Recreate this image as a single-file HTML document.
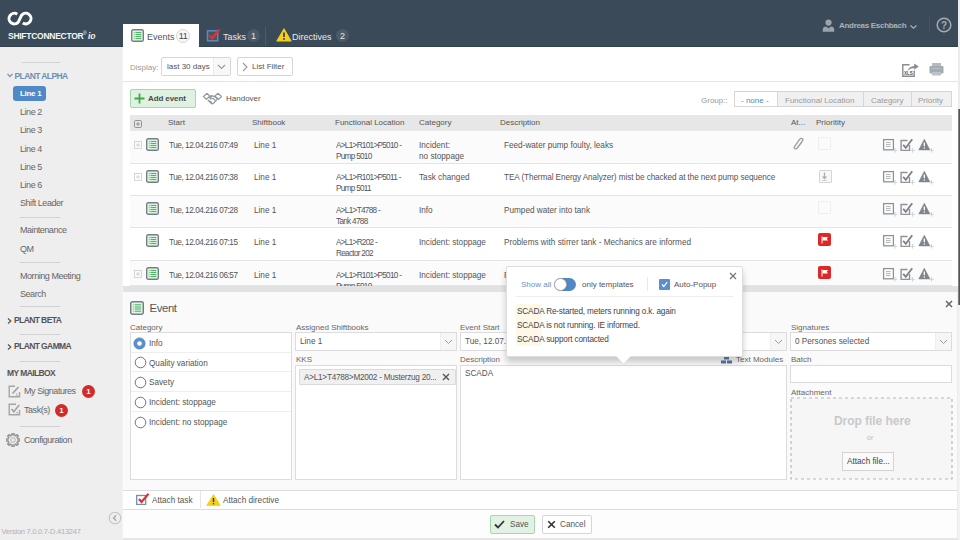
<!DOCTYPE html><html><head><meta charset="utf-8"><style>
*{box-sizing:border-box;margin:0;padding:0}
html,body{width:960px;height:540px;overflow:hidden;background:#fff;font-family:"Liberation Sans",sans-serif;font-size:8px;color:#555}
div,span,svg{position:absolute}
.t{white-space:nowrap;line-height:10px}
.sl{left:20px;color:#666;font-size:9px;letter-spacing:-0.45px}
.sdiv{left:20px;width:40px;height:1px;background:#d2d2d2}
.sh{left:7px;font-weight:bold;color:#555;font-size:8.5px;letter-spacing:-0.6px}
.badge{width:14px;height:14px;border-radius:7px;text-align:center;line-height:14px;font-size:8px}
.box{border:1px solid #dcdcdc;background:#fff}
.th{top:118px;color:#555;white-space:nowrap;line-height:10px}
.c{color:#555;white-space:nowrap;line-height:11px;font-size:8.2px}
.lbl{color:#666;white-space:nowrap;line-height:10px}
</style></head><body>
<div style="left:0;top:0;width:960px;height:47px;background:#3b4a59;border-bottom:1px solid #33414e"></div>
<div style="left:0;top:47px;width:122px;height:493px;background:#eeeeee"></div>
<div style="left:122px;top:47px;width:1px;height:493px;background:#f3f3f3"></div>
<svg style="left:0;top:0" width="40" height="30" viewBox="0 0 40 30">
<path d="M17.19 14.16 A5.3 5.3 0 1 0 18.36 22.01 L21.64 15.19 A5.3 5.3 0 1 1 22.81 23.04" fill="none" stroke="#fff" stroke-width="3"/>
</svg>
<div class="t" style="left:8px;top:31px;color:#f4f6f8;font-weight:bold;font-size:8.5px;letter-spacing:-0.27px">SHIFTCONNECTOR</div>
<div class="t" style="left:83px;top:28px;color:#f4f6f8;font-size:5px">&reg;</div>
<div class="t" style="left:88px;top:31px;color:#f4f6f8;font-weight:bold;font-style:italic;font-size:8.5px">io</div>
<div style="left:123px;top:24px;width:76px;height:23px;background:#fff"></div>
<svg style="left:131px;top:29px" width="13" height="13" viewBox="0 0 13 13">
<rect x="0.7" y="0.7" width="11.6" height="11.6" rx="1.6" fill="#eef8f0" stroke="#747c84" stroke-width="1.4"/>
<rect x="2.2" y="2.2" width="8.6" height="8.6" fill="#d8f1dd"/>
<path d="M4.6 3.5H10.3M4.6 5.5H10.3M4.6 7.5H10.3M4.6 9.5H10.3" stroke="#52b468" stroke-width="1"/>
<path d="M2.8 3.5H3.8M2.8 5.5H3.8M2.8 7.5H3.8M2.8 9.5H3.8" stroke="#7cc98c" stroke-width="1"/>
</svg>
<div class="t" style="left:147px;top:31.5px;font-size:9px;color:#555">Events</div>
<div class="badge" style="left:176px;top:29px;width:14px;height:14px;border:1px solid #d8d8d8;background:#f7f7f7;color:#444;font-size:9px;line-height:12.5px;letter-spacing:-0.5px">11</div>
<svg style="left:206px;top:28px" width="15" height="15" viewBox="0 0 15 15">
<rect x="1.5" y="2.8" width="10.2" height="10" fill="#fff" fill-opacity="0.05" stroke="#5f8ac0" stroke-width="1.5"/>
<path d="M3.5 7.3 L6.2 10.3 L13.5 1.5" fill="none" stroke="#e03131" stroke-width="2.4"/>
</svg>
<div class="t" style="left:223px;top:31.5px;font-size:9px;color:#e6e9ec">Tasks</div>
<div class="badge" style="left:247px;top:29px;width:13px;height:13px;background:#4b5a68;color:#e6e9ec;font-size:9px;line-height:14px">1</div>
<div style="left:265px;top:27px;width:1px;height:19px;background:#4d5c6a"></div>
<svg style="left:276px;top:28px" width="16" height="14" viewBox="0 0 16 14">
<path d="M8 1 L15 13 H1 Z" fill="#f4cf1b" stroke="#f4cf1b" stroke-width="1.2" stroke-linejoin="round"/>
<path d="M8 4.5 V9" stroke="#333" stroke-width="1.6"/><circle cx="8" cy="11" r="0.9" fill="#333"/>
</svg>
<div class="t" style="left:292px;top:31.5px;font-size:9px;color:#e6e9ec">Directives</div>
<div class="badge" style="left:336px;top:29px;width:13px;height:13px;background:#4b5a68;color:#e6e9ec;font-size:9px;line-height:14px">2</div>
<svg style="left:822px;top:19px" width="13" height="13" viewBox="0 0 13 13">
<circle cx="6.5" cy="3.6" r="3.1" fill="#9aa4ad"/><path d="M0.8 12.8 V10.5 Q0.8 7.6 4 7.4 L6.5 9.2 L9 7.4 Q12.2 7.6 12.2 10.5 V12.8Z" fill="#9aa4ad"/>
</svg>
<div class="t" style="left:839px;top:21px;font-weight:bold;color:#a9b2ba;font-size:8px;letter-spacing:-0.3px">Andreas Eschbach</div>
<svg style="left:909px;top:24px" width="9" height="6" viewBox="0 0 9 6"><path d="M1.5 1.5 L4.5 4.2 L7.5 1.5" fill="none" stroke="#a9b2ba" stroke-width="1.2"/></svg>
<div style="left:929px;top:16px;width:1px;height:17px;background:#46555f"></div>
<svg style="left:936px;top:17px" width="16" height="16" viewBox="0 0 16 16"><circle cx="8" cy="8" r="6.8" fill="none" stroke="#a3acb4" stroke-width="1.5"/><text x="8" y="11.6" font-family="Liberation Sans" font-size="10" font-weight="bold" fill="#a3acb4" text-anchor="middle">?</text></svg>
<div class="sdiv" style="top:62px;left:22px;width:38px"></div>
<svg style="left:7px;top:72.5px" width="6" height="5" viewBox="0 0 6 5"><path d="M0.5 0.8 L3 3.6 L5.5 0.8" fill="none" stroke="#6c8fb6" stroke-width="1.2"/></svg>
<div class="t" style="left:14.5px;top:70.5px;font-weight:bold;color:#6c8fb6;font-size:8.5px;letter-spacing:-0.6px">PLANT ALPHA</div>
<div style="left:13px;top:86px;width:33px;height:15px;border-radius:3px;background:#4f8ac6"></div>
<div class="t" style="left:20px;top:89px;font-weight:bold;color:#fff;letter-spacing:-0.3px">Line 1</div>
<div class="t sl" style="top:107.1px">Line 2</div>
<div class="t sl" style="top:125.4px">Line 3</div>
<div class="t sl" style="top:143.6px">Line 4</div>
<div class="t sl" style="top:161.7px">Line 5</div>
<div class="t sl" style="top:179.7px">Line 6</div>
<div class="t sl" style="top:198.3px">Shift Leader</div>
<div class="t sl" style="top:225.2px">Maintenance</div>
<div class="t sl" style="top:244.2px">QM</div>
<div class="t sl" style="top:270.7px">Morning Meeting</div>
<div class="t sl" style="top:288.7px">Search</div>
<div class="sdiv" style="top:217px"></div>
<div class="sdiv" style="top:262px"></div>
<div class="sdiv" style="top:306px"></div>
<div class="sdiv" style="top:334px"></div>
<div class="sdiv" style="top:361px"></div>
<svg style="left:7px;top:317.5px" width="5" height="6" viewBox="0 0 5 6"><path d="M1 0.5 L3.8 3 L1 5.5" fill="none" stroke="#555" stroke-width="1.2"/></svg>
<div class="t sh" style="left:14px;top:315px">PLANT BETA</div>
<svg style="left:7px;top:343.5px" width="5" height="6" viewBox="0 0 5 6"><path d="M1 0.5 L3.8 3 L1 5.5" fill="none" stroke="#555" stroke-width="1.2"/></svg>
<div class="t sh" style="left:14px;top:341px">PLANT GAMMA</div>
<div class="t sh" style="top:368px">MY MAILBOX</div>
<svg style="left:7.5px;top:384.5px" width="13" height="13" viewBox="0 0 13 13"><path d="M11.5 7 V11.8 H1.2 V1.2 H7" fill="none" stroke="#a5a5a5" stroke-width="1.4"/><path d="M4.5 8.5 L10.5 2" stroke="#a0a0a0" stroke-width="1.6"/><path d="M8 8.5 L9.5 11" stroke="#b5b5b5" stroke-width="1.2"/></svg>
<div class="t sl" style="left:24px;top:386px">My Signatures</div>
<div class="badge" style="left:82px;top:385px;width:13px;height:13px;background:#d42a2a;color:#fff;font-weight:bold;line-height:13px">1</div>
<svg style="left:7.5px;top:402.5px" width="13" height="13" viewBox="0 0 13 13"><path d="M11.5 7 V11.8 H1.2 V1.2 H8" fill="none" stroke="#a5a5a5" stroke-width="1.4"/><path d="M3.5 6 L5.8 8.8 L11.2 2" fill="none" stroke="#a0a0a0" stroke-width="1.5"/><path d="M8.5 9 L10 11" stroke="#b5b5b5" stroke-width="1.2"/></svg>
<div class="t sl" style="left:24px;top:404.5px">Task(s)</div>
<div class="badge" style="left:55px;top:404px;width:13px;height:13px;background:#d42a2a;color:#fff;font-weight:bold;line-height:13px">1</div>
<div class="sdiv" style="top:426px"></div>
<svg style="left:5.5px;top:433px" width="14" height="14" viewBox="0 0 14 14"><path d="M11.88 5.91 L13.54 6.14 L13.54 7.86 L11.88 8.09 L11.62 8.91 L11.22 9.68 L12.23 11.02 L11.02 12.23 L9.68 11.22 L8.91 11.62 L8.09 11.88 L7.86 13.54 L6.14 13.54 L5.91 11.88 L5.09 11.62 L4.32 11.22 L2.98 12.23 L1.77 11.02 L2.78 9.68 L2.38 8.91 L2.12 8.09 L0.46 7.86 L0.46 6.14 L2.12 5.91 L2.38 5.09 L2.78 4.32 L1.77 2.98 L2.98 1.77 L4.32 2.78 L5.09 2.38 L5.91 2.12 L6.14 0.46 L7.86 0.46 L8.09 2.12 L8.91 2.38 L9.68 2.78 L11.02 1.77 L12.23 2.98 L11.22 4.32 L11.62 5.09Z" fill="none" stroke="#9a9a9a" stroke-width="1.7" stroke-linejoin="round"/><circle cx="7" cy="7" r="2.3" fill="none" stroke="#b0b0b0" stroke-width="1"/></svg>
<div class="t sl" style="left:24px;top:435px">Configuration</div>
<svg style="left:107.5px;top:510.5px" width="14" height="14" viewBox="0 0 14 14"><circle cx="7" cy="7" r="5.8" fill="none" stroke="#c4c4c4" stroke-width="1.1"/><path d="M8.2 4.3 L5.6 7 L8.2 9.7" fill="none" stroke="#a8a8a8" stroke-width="1.4"/></svg>
<div class="t" style="left:1.5px;top:526.5px;color:#b0b0b0;font-size:7.5px;letter-spacing:-0.25px">Version 7.0.0.7-D.413247</div>
<div class="t" style="left:130px;top:63px;color:#999">Display:</div>
<div class="box" style="left:161px;top:57px;width:70px;height:19px;border-color:#d6d6d6;border-radius:2px"></div>
<div style="left:213px;top:58px;width:17px;height:17px;background:#f8f8f8;border-left:1px dotted #e0e0e0"></div>
<svg style="left:217px;top:64px" width="9" height="6" viewBox="0 0 9 6"><path d="M1 1 L4.5 4.5 L8 1" fill="none" stroke="#9a9a9a" stroke-width="1.1"/></svg>
<div class="t" style="left:167px;top:62px;color:#555">last 30 days</div>
<div class="box" style="left:237px;top:57px;width:56px;height:19px;border-color:#d6d6d6;border-radius:2px"></div>
<svg style="left:242px;top:62px" width="6" height="10" viewBox="0 0 6 10"><path d="M1 1 L5 5 L1 9" fill="none" stroke="#999" stroke-width="1.1"/></svg>
<div class="t" style="left:252px;top:62px;color:#555">List Filter</div>
<svg style="left:901px;top:61px" width="19" height="17" viewBox="0 0 19 17"><path d="M8.5 3.8 H1.8 V15.2 H13.2 V9.5" fill="none" stroke="#8c8c8c" stroke-width="1.4"/><path d="M6.5 9.5 Q8 5.5 13.2 5 V2.5 L17.8 5.5 L13.2 8.8 V7 Q9.5 7 6.5 9.5Z" fill="#8c8c8c"/><text x="7.4" y="13.8" font-family="Liberation Sans" font-size="4.6" font-weight="bold" fill="#555" text-anchor="middle">XLS</text></svg>
<svg style="left:929px;top:62px" width="15" height="14" viewBox="0 0 15 14"><rect x="3" y="1" width="9" height="3.5" fill="#b3bac1"/><rect x="0.5" y="4" width="14" height="7.5" rx="1" fill="#a2aab2"/><rect x="2.5" y="6" width="10" height="1" fill="#b9c0c6"/><rect x="3" y="10" width="9" height="3.5" fill="#bcc2c8"/></svg>
<div style="left:123px;top:81px;width:837px;height:1px;background:#e3e3e3"></div>
<div style="left:130px;top:89px;width:66px;height:19px;background:#dff1e1;border:1px solid #a6d7ab;border-radius:2px"></div>
<svg style="left:134px;top:93px" width="11" height="11" viewBox="0 0 11 11"><path d="M5.5 0.5V10.5M0.5 5.5H10.5" stroke="#3eab4b" stroke-width="1.8"/></svg>
<div class="t" style="left:148px;top:94px;color:#4a4a4a;font-weight:bold;letter-spacing:-0.1px">Add event</div>
<svg style="left:202px;top:91px" width="21" height="15" viewBox="0 0 21 15"><g fill="none" stroke="#8f959a" stroke-width="1.15" stroke-linejoin="round"><path d="M1.5 5.5 L5 2.3 L7.8 5 L4.3 8.3Z"/><path d="M13 5 L15.8 2.3 L19.5 5.5 L16.5 8.3Z"/><path d="M6.5 7 L9.3 4.6 L12.8 5.6 L15.5 8 L11.5 12.3 Q10.3 13.3 9.2 12.3 L5.8 9"/><path d="M9.8 5 L8 7.6 Q9.5 8.6 11 7.2 L13.5 9.8 M7.4 9.6 L10 11.8"/></g></svg>
<div class="t" style="left:226px;top:94px;color:#555">Handover</div>
<div class="t" style="left:701px;top:96px;color:#999">Group::</div>
<div style="left:734px;top:91px;width:218px;height:16px;background:#f0f0f0;border:1px solid #d6d6d6"></div>
<div style="left:735px;top:92px;width:42px;height:14px;background:#fff"></div>
<div style="left:777px;top:92px;width:1px;height:14px;background:#d6d6d6"></div>
<div style="left:863px;top:92px;width:1px;height:14px;background:#d6d6d6"></div>
<div style="left:911px;top:92px;width:1px;height:14px;background:#d6d6d6"></div>
<div class="t" style="left:741px;top:96px;color:#4f8ac6">- none -</div>
<div class="t" style="left:785px;top:96px;color:#999">Functional Location</div>
<div class="t" style="left:871px;top:96px;color:#999">Category</div>
<div class="t" style="left:918px;top:96px;color:#999">Priority</div>
<div style="left:130px;top:115px;width:822px;height:16px;background:#e7e7e7"></div>
<svg style="left:133.5px;top:120px" width="8" height="8" viewBox="0 0 8 8"><rect x="0.5" y="0.5" width="7" height="7" rx="1.2" fill="none" stroke="#888" stroke-width="0.9"/><path d="M2 4H6M4 2V6" stroke="#888" stroke-width="0.9"/></svg>
<div class="th" style="left:168px">Start</div>
<div class="th" style="left:252px">Shiftbook</div>
<div class="th" style="left:335px">Functional Location</div>
<div class="th" style="left:419px">Category</div>
<div class="th" style="left:500px">Description</div>
<div class="th" style="left:791px">At...</div>
<div class="th" style="left:816px">Prioritity</div>
<div style="left:130px;top:131px;width:822px;height:33px;background:#fbfbfb;border-bottom:1px solid #e4e4e4"></div>
<svg style="left:134px;top:141px" width="8" height="8" viewBox="0 0 8 8"><rect x="0.5" y="0.5" width="7" height="7" fill="none" stroke="#ccc" stroke-width="0.8"/><path d="M2 4H6M4 2V6" stroke="#ccc" stroke-width="0.8"/></svg>
<svg style="left:146px;top:138px" width="13" height="13" viewBox="0 0 13 13">
<rect x="0.7" y="0.7" width="11.6" height="11.6" rx="1.6" fill="#eef8f0" stroke="#747c84" stroke-width="1.4"/>
<rect x="2.2" y="2.2" width="8.6" height="8.6" fill="#d8f1dd"/>
<path d="M4.6 3.5H10.3M4.6 5.5H10.3M4.6 7.5H10.3M4.6 9.5H10.3" stroke="#52b468" stroke-width="1"/>
<path d="M2.8 3.5H3.8M2.8 5.5H3.8M2.8 7.5H3.8M2.8 9.5H3.8" stroke="#7cc98c" stroke-width="1"/>
</svg>
<div class="c" style="left:169px;top:139.6px;letter-spacing:-0.45px">Tue, 12.04.216 07:49</div>
<div class="c" style="left:254px;top:139.6px">Line 1</div>
<div class="c" style="left:336px;top:139.6px;letter-spacing:-0.7px">A&gt;L1&gt;R101&gt;P5010 -<br>Pump 5010</div>
<div class="c" style="left:419px;top:139.6px">Incident:<br>no stoppage</div>
<div class="c" style="left:504px;top:139.6px;letter-spacing:0px">Feed-water pump foulty, leaks</div>
<svg style="left:793px;top:137px" width="11" height="13" viewBox="0 0 11 13"><path d="M8.8 5.2 L4.3 11 Q3 12.4 1.8 11.6 Q0.7 10.8 1.7 9.3 L6.8 2.2 Q8 0.8 9.3 1.6 Q10.4 2.5 9.4 3.9 L5 9.8" fill="none" stroke="#979ea4" stroke-width="1.3"/></svg>
<div style="left:818px;top:137px;width:13px;height:13px;border:1px solid #eee;border-radius:1px"></div>
<svg style="left:882px;top:138px" width="17" height="16" viewBox="0 0 17 16"><rect x="1.6" y="1.6" width="9.8" height="10.2" fill="#fff" stroke="#8d9399" stroke-width="1.3"/><path d="M4 4.6H8.6M4 6.6H8.6M4 8.6H8.6" stroke="#a3a9ae" stroke-width="0.9"/><path d="M13 10V14.6M10.7 12.3H15.3" stroke="#cfd3d6" stroke-width="1"/></svg>
<svg style="left:899px;top:138px" width="17" height="16" viewBox="0 0 17 16"><path d="M10.5 7V12.4H2.1V2.5H8.5" fill="none" stroke="#8d9399" stroke-width="1.4"/><path d="M4.2 6.8 L6.8 9.8 L13.2 1.3" fill="none" stroke="#7d848a" stroke-width="1.9"/><path d="M13.5 10V14.6M11.2 12.3H15.8" stroke="#cfd3d6" stroke-width="1"/></svg>
<svg style="left:918px;top:138px" width="17" height="16" viewBox="0 0 17 16"><path d="M6.3 1.3 L11.9 11.9 H0.8Z" fill="#7e858b" stroke="#7e858b" stroke-width="0.6" stroke-linejoin="round"/><path d="M6.3 4.6V8.3" stroke="#fff" stroke-width="1.3"/><circle cx="6.3" cy="10" r="0.75" fill="#fff"/><path d="M13.5 10V14.6M11.2 12.3H15.8" stroke="#cfd3d6" stroke-width="1"/></svg>
<div style="left:130px;top:164px;width:822px;height:32px;background:#ffffff;border-bottom:1px solid #e4e4e4"></div>
<svg style="left:134px;top:173px" width="8" height="8" viewBox="0 0 8 8"><rect x="0.5" y="0.5" width="7" height="7" fill="none" stroke="#ccc" stroke-width="0.8"/><path d="M2 4H6M4 2V6" stroke="#ccc" stroke-width="0.8"/></svg>
<svg style="left:146px;top:170px" width="13" height="13" viewBox="0 0 13 13">
<rect x="0.7" y="0.7" width="11.6" height="11.6" rx="1.6" fill="#eef8f0" stroke="#747c84" stroke-width="1.4"/>
<rect x="2.2" y="2.2" width="8.6" height="8.6" fill="#d8f1dd"/>
<path d="M4.6 3.5H10.3M4.6 5.5H10.3M4.6 7.5H10.3M4.6 9.5H10.3" stroke="#52b468" stroke-width="1"/>
<path d="M2.8 3.5H3.8M2.8 5.5H3.8M2.8 7.5H3.8M2.8 9.5H3.8" stroke="#7cc98c" stroke-width="1"/>
</svg>
<div class="c" style="left:169px;top:171.6px;letter-spacing:-0.45px">Tue, 12.04.216 07:38</div>
<div class="c" style="left:254px;top:171.6px">Line 1</div>
<div class="c" style="left:336px;top:171.6px;letter-spacing:-0.7px">A&gt;L1&gt;R101&gt;P5011 -<br>Pump 5011</div>
<div class="c" style="left:419px;top:171.6px">Task changed<br></div>
<div class="c" style="left:504px;top:171.6px;letter-spacing:-0.09px">TEA (Thermal Energy Analyzer) mist be chacked at the next pump sequence</div>
<div style="left:818.5px;top:169.5px;width:13px;height:13px;border:1px solid #d4d4d4;border-radius:1px;background:#f8f8f8"></div>
<svg style="left:821px;top:172px" width="7" height="9" viewBox="0 0 7 9"><path d="M3.5 0.5V5" stroke="#b0b0b0" stroke-width="1.3"/><path d="M0.8 4.5H6.2L3.5 7.8Z" fill="#b0b0b0"/><path d="M1 8.5H6" stroke="#c8c8c8" stroke-width="0.8"/></svg>
<svg style="left:882px;top:170px" width="17" height="16" viewBox="0 0 17 16"><rect x="1.6" y="1.6" width="9.8" height="10.2" fill="#fff" stroke="#8d9399" stroke-width="1.3"/><path d="M4 4.6H8.6M4 6.6H8.6M4 8.6H8.6" stroke="#a3a9ae" stroke-width="0.9"/><path d="M13 10V14.6M10.7 12.3H15.3" stroke="#cfd3d6" stroke-width="1"/></svg>
<svg style="left:899px;top:170px" width="17" height="16" viewBox="0 0 17 16"><path d="M10.5 7V12.4H2.1V2.5H8.5" fill="none" stroke="#8d9399" stroke-width="1.4"/><path d="M4.2 6.8 L6.8 9.8 L13.2 1.3" fill="none" stroke="#7d848a" stroke-width="1.9"/><path d="M13.5 10V14.6M11.2 12.3H15.8" stroke="#cfd3d6" stroke-width="1"/></svg>
<svg style="left:918px;top:170px" width="17" height="16" viewBox="0 0 17 16"><path d="M6.3 1.3 L11.9 11.9 H0.8Z" fill="#7e858b" stroke="#7e858b" stroke-width="0.6" stroke-linejoin="round"/><path d="M6.3 4.6V8.3" stroke="#fff" stroke-width="1.3"/><circle cx="6.3" cy="10" r="0.75" fill="#fff"/><path d="M13.5 10V14.6M11.2 12.3H15.8" stroke="#cfd3d6" stroke-width="1"/></svg>
<div style="left:130px;top:196px;width:822px;height:32px;background:#fbfbfb;border-bottom:1px solid #e4e4e4"></div>
<svg style="left:146px;top:202px" width="13" height="13" viewBox="0 0 13 13">
<rect x="0.7" y="0.7" width="11.6" height="11.6" rx="1.6" fill="#eef8f0" stroke="#747c84" stroke-width="1.4"/>
<rect x="2.2" y="2.2" width="8.6" height="8.6" fill="#d8f1dd"/>
<path d="M4.6 3.5H10.3M4.6 5.5H10.3M4.6 7.5H10.3M4.6 9.5H10.3" stroke="#52b468" stroke-width="1"/>
<path d="M2.8 3.5H3.8M2.8 5.5H3.8M2.8 7.5H3.8M2.8 9.5H3.8" stroke="#7cc98c" stroke-width="1"/>
</svg>
<div class="c" style="left:169px;top:204.6px;letter-spacing:-0.45px">Tue, 12.04.216 07:28</div>
<div class="c" style="left:254px;top:204.6px">Line 1</div>
<div class="c" style="left:336px;top:204.6px;letter-spacing:-0.7px">A&gt;L1&gt;T4788 -<br>Tank 4788</div>
<div class="c" style="left:419px;top:204.6px">Info<br></div>
<div class="c" style="left:504px;top:204.6px;letter-spacing:0px">Pumped water into tank</div>
<div style="left:818px;top:201px;width:13px;height:13px;border:1px solid #eee;border-radius:1px"></div>
<svg style="left:882px;top:202px" width="17" height="16" viewBox="0 0 17 16"><rect x="1.6" y="1.6" width="9.8" height="10.2" fill="#fff" stroke="#8d9399" stroke-width="1.3"/><path d="M4 4.6H8.6M4 6.6H8.6M4 8.6H8.6" stroke="#a3a9ae" stroke-width="0.9"/><path d="M13 10V14.6M10.7 12.3H15.3" stroke="#cfd3d6" stroke-width="1"/></svg>
<svg style="left:899px;top:202px" width="17" height="16" viewBox="0 0 17 16"><path d="M10.5 7V12.4H2.1V2.5H8.5" fill="none" stroke="#8d9399" stroke-width="1.4"/><path d="M4.2 6.8 L6.8 9.8 L13.2 1.3" fill="none" stroke="#7d848a" stroke-width="1.9"/><path d="M13.5 10V14.6M11.2 12.3H15.8" stroke="#cfd3d6" stroke-width="1"/></svg>
<svg style="left:918px;top:202px" width="17" height="16" viewBox="0 0 17 16"><path d="M6.3 1.3 L11.9 11.9 H0.8Z" fill="#7e858b" stroke="#7e858b" stroke-width="0.6" stroke-linejoin="round"/><path d="M6.3 4.6V8.3" stroke="#fff" stroke-width="1.3"/><circle cx="6.3" cy="10" r="0.75" fill="#fff"/><path d="M13.5 10V14.6M11.2 12.3H15.8" stroke="#cfd3d6" stroke-width="1"/></svg>
<div style="left:130px;top:228px;width:822px;height:33px;background:#ffffff;border-bottom:1px solid #e4e4e4"></div>
<svg style="left:146px;top:234px" width="13" height="13" viewBox="0 0 13 13">
<rect x="0.7" y="0.7" width="11.6" height="11.6" rx="1.6" fill="#eef8f0" stroke="#747c84" stroke-width="1.4"/>
<rect x="2.2" y="2.2" width="8.6" height="8.6" fill="#d8f1dd"/>
<path d="M4.6 3.5H10.3M4.6 5.5H10.3M4.6 7.5H10.3M4.6 9.5H10.3" stroke="#52b468" stroke-width="1"/>
<path d="M2.8 3.5H3.8M2.8 5.5H3.8M2.8 7.5H3.8M2.8 9.5H3.8" stroke="#7cc98c" stroke-width="1"/>
</svg>
<div class="c" style="left:169px;top:236.6px;letter-spacing:-0.45px">Tue, 12.04.216 07:15</div>
<div class="c" style="left:254px;top:236.6px">Line 1</div>
<div class="c" style="left:336px;top:236.6px;letter-spacing:-0.7px">A&gt;L1&gt;R202 -<br>Reactor 202</div>
<div class="c" style="left:419px;top:236.6px">Incident: stoppage<br></div>
<div class="c" style="left:504px;top:236.6px;letter-spacing:0px">Problems with stirrer tank -  Mechanics are informed</div>
<div style="left:818px;top:233px;width:13px;height:13px;border-radius:2px;background:#e02727"></div>
<svg style="left:821px;top:236px" width="8" height="8" viewBox="0 0 8 8"><path d="M1 0.5V7.5" stroke="#fff" stroke-width="1"/><path d="M1.5 1H7L5.8 2.8L7 4.5H1.5Z" fill="#fff"/></svg>
<svg style="left:882px;top:234px" width="17" height="16" viewBox="0 0 17 16"><rect x="1.6" y="1.6" width="9.8" height="10.2" fill="#fff" stroke="#8d9399" stroke-width="1.3"/><path d="M4 4.6H8.6M4 6.6H8.6M4 8.6H8.6" stroke="#a3a9ae" stroke-width="0.9"/><path d="M13 10V14.6M10.7 12.3H15.3" stroke="#cfd3d6" stroke-width="1"/></svg>
<svg style="left:899px;top:234px" width="17" height="16" viewBox="0 0 17 16"><path d="M10.5 7V12.4H2.1V2.5H8.5" fill="none" stroke="#8d9399" stroke-width="1.4"/><path d="M4.2 6.8 L6.8 9.8 L13.2 1.3" fill="none" stroke="#7d848a" stroke-width="1.9"/><path d="M13.5 10V14.6M11.2 12.3H15.8" stroke="#cfd3d6" stroke-width="1"/></svg>
<svg style="left:918px;top:234px" width="17" height="16" viewBox="0 0 17 16"><path d="M6.3 1.3 L11.9 11.9 H0.8Z" fill="#7e858b" stroke="#7e858b" stroke-width="0.6" stroke-linejoin="round"/><path d="M6.3 4.6V8.3" stroke="#fff" stroke-width="1.3"/><circle cx="6.3" cy="10" r="0.75" fill="#fff"/><path d="M13.5 10V14.6M11.2 12.3H15.8" stroke="#cfd3d6" stroke-width="1"/></svg>
<div style="left:130px;top:261px;width:822px;height:25px;background:#fbfbfb;border-bottom:1px solid #e4e4e4"></div>
<svg style="left:134px;top:270px" width="8" height="8" viewBox="0 0 8 8"><rect x="0.5" y="0.5" width="7" height="7" fill="none" stroke="#ccc" stroke-width="0.8"/><path d="M2 4H6M4 2V6" stroke="#ccc" stroke-width="0.8"/></svg>
<svg style="left:146px;top:267px" width="13" height="13" viewBox="0 0 13 13">
<rect x="0.7" y="0.7" width="11.6" height="11.6" rx="1.6" fill="#eef8f0" stroke="#747c84" stroke-width="1.4"/>
<rect x="2.2" y="2.2" width="8.6" height="8.6" fill="#d8f1dd"/>
<path d="M4.6 3.5H10.3M4.6 5.5H10.3M4.6 7.5H10.3M4.6 9.5H10.3" stroke="#52b468" stroke-width="1"/>
<path d="M2.8 3.5H3.8M2.8 5.5H3.8M2.8 7.5H3.8M2.8 9.5H3.8" stroke="#7cc98c" stroke-width="1"/>
</svg>
<div class="c" style="left:169px;top:269.6px;letter-spacing:-0.45px">Tue, 12.04.216 06:57</div>
<div class="c" style="left:254px;top:269.6px">Line 1</div>
<div class="c" style="left:336px;top:269.6px;letter-spacing:-0.7px">A&gt;L1&gt;R101&gt;P5010 -<br>Pump 5010</div>
<div class="c" style="left:419px;top:269.6px">Incident: stoppage<br></div>
<div class="c" style="left:504px;top:269.6px;letter-spacing:0px">Problems with pump</div>
<div style="left:818px;top:266px;width:13px;height:13px;border-radius:2px;background:#e02727"></div>
<svg style="left:821px;top:269px" width="8" height="8" viewBox="0 0 8 8"><path d="M1 0.5V7.5" stroke="#fff" stroke-width="1"/><path d="M1.5 1H7L5.8 2.8L7 4.5H1.5Z" fill="#fff"/></svg>
<svg style="left:882px;top:267px" width="17" height="16" viewBox="0 0 17 16"><rect x="1.6" y="1.6" width="9.8" height="10.2" fill="#fff" stroke="#8d9399" stroke-width="1.3"/><path d="M4 4.6H8.6M4 6.6H8.6M4 8.6H8.6" stroke="#a3a9ae" stroke-width="0.9"/><path d="M13 10V14.6M10.7 12.3H15.3" stroke="#cfd3d6" stroke-width="1"/></svg>
<svg style="left:899px;top:267px" width="17" height="16" viewBox="0 0 17 16"><path d="M10.5 7V12.4H2.1V2.5H8.5" fill="none" stroke="#8d9399" stroke-width="1.4"/><path d="M4.2 6.8 L6.8 9.8 L13.2 1.3" fill="none" stroke="#7d848a" stroke-width="1.9"/><path d="M13.5 10V14.6M11.2 12.3H15.8" stroke="#cfd3d6" stroke-width="1"/></svg>
<svg style="left:918px;top:267px" width="17" height="16" viewBox="0 0 17 16"><path d="M6.3 1.3 L11.9 11.9 H0.8Z" fill="#7e858b" stroke="#7e858b" stroke-width="0.6" stroke-linejoin="round"/><path d="M6.3 4.6V8.3" stroke="#fff" stroke-width="1.3"/><circle cx="6.3" cy="10" r="0.75" fill="#fff"/><path d="M13.5 10V14.6M11.2 12.3H15.8" stroke="#cfd3d6" stroke-width="1"/></svg>
<div style="left:123px;top:286px;width:835px;height:6px;background:#e0e2e4"></div>
<div style="left:123px;top:292px;width:835px;height:248px;background:#fafafa"></div>
<svg style="left:130px;top:301px" width="14" height="14" viewBox="0 0 13 13">
<rect x="0.7" y="0.7" width="11.6" height="11.6" rx="1.6" fill="#eef8f0" stroke="#747c84" stroke-width="1.4"/>
<rect x="2.2" y="2.2" width="8.6" height="8.6" fill="#d8f1dd"/>
<path d="M4.6 3.5H10.3M4.6 5.5H10.3M4.6 7.5H10.3M4.6 9.5H10.3" stroke="#52b468" stroke-width="1"/>
<path d="M2.8 3.5H3.8M2.8 5.5H3.8M2.8 7.5H3.8M2.8 9.5H3.8" stroke="#7cc98c" stroke-width="1"/>
</svg>
<div class="t" style="left:149.5px;top:300.5px;font-size:11.3px;line-height:14px;color:#555;letter-spacing:-0.35px">Event</div>
<svg style="left:945px;top:300px" width="8" height="8" viewBox="0 0 8 8"><path d="M1 1L7 7M7 1L1 7" stroke="#666" stroke-width="1.5"/></svg>
<div class="lbl" style="left:130px;top:323px">Category</div>
<div class="lbl" style="left:296px;top:323px">Assigned Shiftbooks</div>
<div class="lbl" style="left:460px;top:323px">Event Start</div>
<div class="lbl" style="left:791px;top:323px">Signatures</div>
<div class="box" style="left:130px;top:332px;width:162px;height:148px"></div>
<div style="left:131px;top:352px;width:160px;height:1px;background:#eeeeee"></div>
<svg style="left:133px;top:337px" width="13" height="13" viewBox="0 0 13 13"><circle cx="6.5" cy="6.5" r="5.6" fill="#5b8fca" stroke="#4a80c0" stroke-width="0.8"/><circle cx="6.5" cy="6.5" r="2.3" fill="#fff"/></svg>
<div class="c" style="left:149px;top:338px;color:#555">Info</div>
<div style="left:131px;top:371px;width:160px;height:1px;background:#eeeeee"></div>
<svg style="left:133.5px;top:356px" width="13" height="13" viewBox="0 0 13 13"><circle cx="6.5" cy="6.5" r="5.3" fill="#fff" stroke="#6e6e6e" stroke-width="1"/></svg>
<div class="c" style="left:149px;top:358px;color:#555">Quality variation</div>
<div style="left:131px;top:391px;width:160px;height:1px;background:#eeeeee"></div>
<svg style="left:133.5px;top:376px" width="13" height="13" viewBox="0 0 13 13"><circle cx="6.5" cy="6.5" r="5.3" fill="#fff" stroke="#6e6e6e" stroke-width="1"/></svg>
<div class="c" style="left:149px;top:377px;color:#555">Savety</div>
<div style="left:131px;top:411px;width:160px;height:1px;background:#eeeeee"></div>
<svg style="left:133.5px;top:396px" width="13" height="13" viewBox="0 0 13 13"><circle cx="6.5" cy="6.5" r="5.3" fill="#fff" stroke="#6e6e6e" stroke-width="1"/></svg>
<div class="c" style="left:149px;top:397px;color:#555">Incident: stoppage</div>
<svg style="left:133.5px;top:416px" width="13" height="13" viewBox="0 0 13 13"><circle cx="6.5" cy="6.5" r="5.3" fill="#fff" stroke="#6e6e6e" stroke-width="1"/></svg>
<div class="c" style="left:149px;top:417px;color:#555">Incident: no stoppage</div>
<div class="box" style="left:295px;top:332px;width:162px;height:19px"></div>
<div style="left:440px;top:333px;width:16px;height:17px;background:#f6f6f6;border-left:1px solid #eee"></div>
<svg style="left:444px;top:339px" width="9" height="6" viewBox="0 0 9 6"><path d="M1 1 L4.5 4.5 L8 1" fill="none" stroke="#999" stroke-width="1"/></svg>
<div class="c" style="left:300px;top:336px">Line 1</div>
<div class="lbl" style="left:296px;top:355px">KKS</div>
<div class="box" style="left:295px;top:365px;width:162px;height:115px"></div>
<div style="left:299px;top:369px;width:157px;height:16px;background:#f0f0f0;border:1px solid #dadada;border-radius:1px"></div>
<div class="c" style="left:304px;top:372px;letter-spacing:-0.25px">A&gt;L1&gt;T4788&gt;M2002 - Musterzug 20...</div>
<svg style="left:442px;top:373px" width="8" height="8" viewBox="0 0 8 8"><path d="M1 1L7 7M7 1L1 7" stroke="#555" stroke-width="1.4"/></svg>
<div class="box" style="left:460px;top:332px;width:327px;height:19px"></div>
<div style="left:770px;top:333px;width:16px;height:17px;background:#f6f6f6;border-left:1px solid #eee"></div>
<svg style="left:774px;top:339px" width="9" height="6" viewBox="0 0 9 6"><path d="M1 1 L4.5 4.5 L8 1" fill="none" stroke="#999" stroke-width="1"/></svg>
<div class="c" style="left:465px;top:336px">Tue, 12.07.2016</div>
<div class="lbl" style="left:460px;top:355px">Description</div>
<svg style="left:721px;top:357px" width="11" height="7" viewBox="0 0 11 7"><rect x="3" y="0" width="5" height="2.5" fill="#5b7fa8"/><rect x="0" y="3.5" width="5" height="3" fill="#4f79a8"/><rect x="6" y="3.5" width="5" height="3" fill="#4f79a8"/></svg>
<div class="lbl" style="left:736px;top:355px;color:#666">Text Modules</div>
<div class="box" style="left:460px;top:365px;width:327px;height:115px"></div>
<div class="c" style="left:465px;top:368px">SCADA</div>
<div class="box" style="left:790px;top:332px;width:162px;height:19px"></div>
<div style="left:935px;top:333px;width:16px;height:17px;background:#f6f6f6;border-left:1px solid #eee"></div>
<svg style="left:939px;top:339px" width="9" height="6" viewBox="0 0 9 6"><path d="M1 1 L4.5 4.5 L8 1" fill="none" stroke="#999" stroke-width="1"/></svg>
<div class="c" style="left:795px;top:336px">0 Persones selected</div>
<div class="lbl" style="left:791px;top:355px">Batch</div>
<div class="box" style="left:790px;top:365px;width:162px;height:18px"></div>
<div class="lbl" style="left:791px;top:388px">Attachment</div>
<svg style="left:790px;top:397px" width="163" height="83" viewBox="0 0 163 83"><rect x="1" y="1" width="161" height="81" fill="#f6f6f6" stroke="#b8b8b8" stroke-width="1.2" stroke-dasharray="3 3"/></svg>
<div class="t" style="left:834px;top:413.5px;font-size:12px;line-height:15px;font-weight:bold;color:#c9c9c9;letter-spacing:-0.05px">Drop file here</div>
<div class="t" style="left:867px;top:433px;font-size:7px;color:#bbb">or</div>
<div style="left:842px;top:452px;width:52px;height:19px;background:#fafafa;border:1px solid #d3d3d3"></div>
<div class="c" style="left:847px;top:456px;color:#444">Attach file...</div>
<div style="left:123px;top:490px;width:835px;height:1px;background:#dcdcdc"></div>
<div style="left:123px;top:491px;width:835px;height:18px;background:#fff"></div>
<div style="left:123px;top:509px;width:835px;height:1px;background:#dcdcdc"></div>
<div style="left:123px;top:510px;width:835px;height:28px;background:#fdfdfd"></div>
<div style="left:123px;top:538px;width:837px;height:2px;background:#e6e6e6"></div>
<svg style="left:136px;top:493px" width="14" height="12" viewBox="0 0 14 12"><rect x="0.7" y="2.5" width="9" height="9" fill="#fff" stroke="#6f8fb5" stroke-width="1.3"/><path d="M3 6 L5.5 9 L12.5 0.8" fill="none" stroke="#e03131" stroke-width="2.2"/></svg>
<div class="c" style="left:152px;top:494.5px">Attach task</div>
<div style="left:200px;top:491px;width:1px;height:17px;background:#e6e6e6"></div>
<svg style="left:206px;top:494px" width="15" height="12" viewBox="0 0 15 12"><path d="M7.5 0.6 L14.3 11.4 H0.7 Z" fill="#f4cf1b" stroke="#f4cf1b" stroke-width="0.8" stroke-linejoin="round"/><path d="M7.5 4 V8" stroke="#333" stroke-width="1.4"/><circle cx="7.5" cy="9.7" r="0.8" fill="#333"/></svg>
<div class="c" style="left:223px;top:494.5px">Attach directive</div>
<div style="left:490px;top:515px;width:45px;height:19px;background:#e1f1e3;border:1px solid #a5d6ad;border-radius:2px"></div>
<svg style="left:494px;top:520px" width="11" height="9" viewBox="0 0 11 9"><path d="M1 4.5 L4 7.5 L10 1" fill="none" stroke="#333" stroke-width="1.8"/></svg>
<div class="c" style="left:510px;top:519px;color:#555">Save</div>
<div style="left:542px;top:515px;width:50px;height:19px;background:#fff;border:1px solid #d6d6d6;border-radius:2px"></div>
<svg style="left:547px;top:520px" width="9" height="9" viewBox="0 0 9 9"><path d="M1.2 1.2L7.8 7.8M7.8 1.2L1.2 7.8" stroke="#333" stroke-width="1.6"/></svg>
<div class="c" style="left:560px;top:519px;color:#555">Cancel</div>
<div style="left:505.5px;top:266px;width:237px;height:91px;background:#fff;border:1px solid #dedede;border-radius:2px;box-shadow:0 5px 6px rgba(0,0,0,0.2)"></div>
<svg style="left:615px;top:356px" width="18" height="10" viewBox="0 0 18 10"><path d="M1 0 L8.5 8.3 L16 0Z" fill="#fff"/><path d="M1 0.3 L8.5 8.3 L16 0.3" fill="none" stroke="#d8d8d8" stroke-width="0.8"/></svg>
<div class="t" style="left:521px;top:280px;color:#6a93c4">Show all</div>
<div style="left:555px;top:278px;width:21px;height:13px;border-radius:7px;background:#4f8ac6"></div>
<div style="left:554px;top:278px;width:13px;height:13px;border-radius:7px;background:#fff;border:1px solid #aaa;box-shadow:0 0 1px rgba(0,0,0,0.3)"></div>
<div class="t" style="left:582px;top:280px;color:#555">only templates</div>
<div style="left:647px;top:277px;width:1px;height:14px;background:#eaeaea"></div>
<div style="left:659px;top:279px;width:11px;height:11px;background:#5a8fcc;border-radius:1px"></div>
<svg style="left:660px;top:280px" width="9" height="9" viewBox="0 0 9 9"><path d="M2 4.5 L3.8 6.5 L7.2 2.2" fill="none" stroke="#fff" stroke-width="1.2"/></svg>
<div class="t" style="left:674px;top:280px;color:#555">Auto-Popup</div>
<svg style="left:729px;top:272px" width="8" height="8" viewBox="0 0 8 8"><path d="M1 1L7 7M7 1L1 7" stroke="#777" stroke-width="1.3"/></svg>
<div style="left:516px;top:296px;width:217px;height:1px;background:#eeeeee"></div>
<div style="left:516px;top:304px;width:26px;height:42px;background:#fdf8e8"></div>
<div class="c" style="left:517px;top:306.0px;color:#444;letter-spacing:-0.15px">SCADA Re-started, meters running o.k. again</div>
<div class="c" style="left:517px;top:319.8px;color:#444;letter-spacing:-0.15px">SCADA is not running. IE informed.</div>
<div class="c" style="left:517px;top:333.6px;color:#444;letter-spacing:-0.15px">SCADA support contacted</div>
<div style="left:958px;top:0;width:2px;height:109px;background:#ececec"></div>
<div style="left:958px;top:109px;width:2px;height:196px;background:linear-gradient(to right,#9a9a9a,#3c3c3c)"></div>
<div style="left:958px;top:305px;width:2px;height:235px;background:#f2f2f2"></div>
<div style="left:957px;top:292px;width:1px;height:246px;background:#ececec"></div>
</body></html>
